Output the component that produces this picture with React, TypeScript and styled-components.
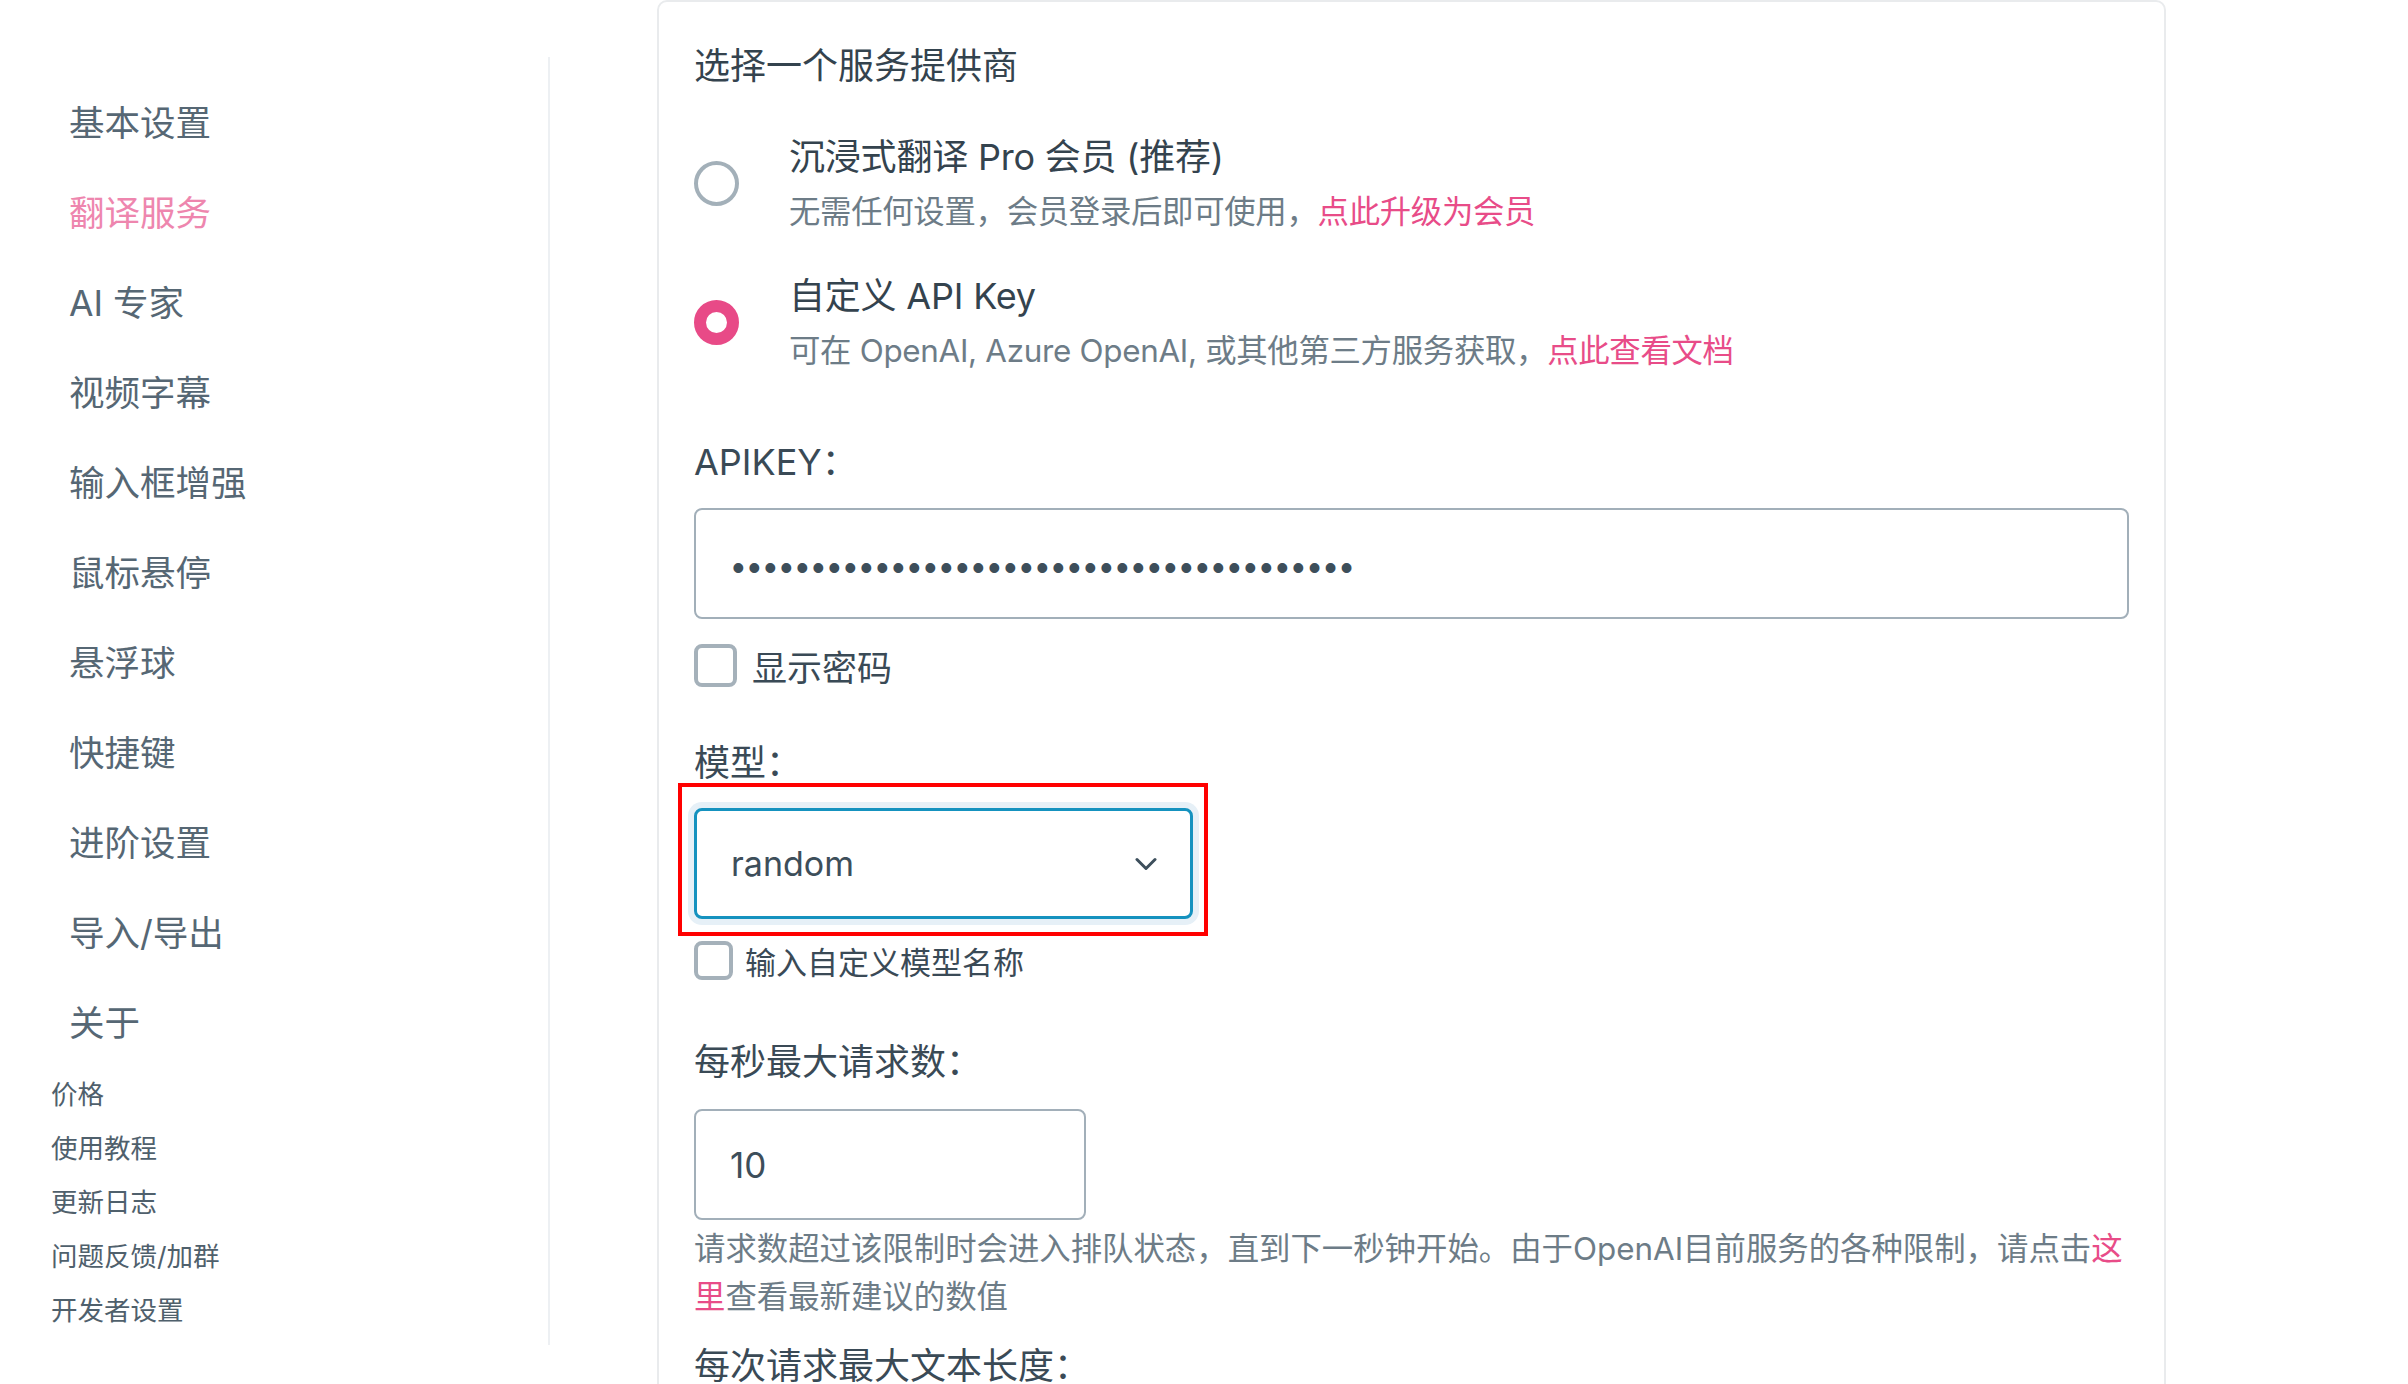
import React from "react";
import styled, { createGlobalStyle } from "styled-components";

const Global = createGlobalStyle`
  html, body { margin: 0; padding: 0; background: #ffffff; }
  body {
    font-family: Inter, "Noto Sans CJK SC", sans-serif;
    width: 2408px;
    height: 1384px;
    overflow: hidden;
  }
  * { box-sizing: border-box; }
`;

const Page = styled.div`
  display: flex;
  align-items: flex-start;
  height: 1384px;
  overflow: hidden;
`;

const Sidebar = styled.nav`
  width: 550px;
  flex: none;
  margin-top: 57px;
  height: 1288px;
  border-right: 2px solid #edf0f3;
  padding-top: 18px;
  display: flex;
  flex-direction: column;
`;

const NavItem = styled.a<{ $active?: boolean }>`
  height: 90px;
  display: flex;
  align-items: center;
  padding-left: 69px;
  font-size: 35.5px;
  color: ${(p) => (p.$active ? "#ee86ae" : "#566774")};
  text-decoration: none;
`;

const SubLink = styled.a`
  height: 54px;
  display: flex;
  align-items: center;
  padding-left: 51px;
  font-size: 26.5px;
  color: #4f606c;
  text-decoration: none;
`;

const Card = styled.main`
  margin-left: 107px;
  width: 1509px;
  flex: none;
  min-height: 1500px;
  border: 2px solid #e9ebed;
  border-radius: 10px;
  padding: 37px 35px 0;
  display: flex;
  flex-direction: column;
  align-items: flex-start;
`;

const Heading = styled.h3`
  margin: 0;
  font-size: 36px;
  line-height: 54px;
  font-weight: 400;
  color: #34434e;
`;

const RadioGroup = styled.div`
  margin-top: 37px;
  display: flex;
  flex-direction: column;
  gap: 33px;
`;

const Option = styled.label`
  display: flex;
  align-items: center;
  gap: 50px;
`;

const Radio = styled.input.attrs({ type: "radio" })`
  appearance: none;
  margin: 0;
  flex: none;
  width: 45px;
  height: 45px;
  border-radius: 50%;
  background: #fff;
  border: 4px solid #a3b0b9;
  &:checked {
    border: 12.5px solid #e84a87;
  }
`;

const OptionText = styled.div`
  display: flex;
  flex-direction: column;
`;

const OptionTitle = styled.div`
  font-size: 36px;
  line-height: 54px;
  color: #34434e;
  letter-spacing: -0.2px;
`;

const OptionDesc = styled.div`
  margin-top: 4px;
  font-size: 31.4px;
  line-height: 48px;
  color: #6d7c87;
  letter-spacing: -0.3px;
`;

const Link = styled.a`
  color: #e84c88;
  text-decoration: none;
`;

const FieldLabel = styled.div<{ $mt: number }>`
  margin-top: ${(p) => p.$mt}px;
  font-size: 36px;
  line-height: 54px;
  color: #3a4a56;
`;

const TextInput = styled.input<{ $width: number; $mt: number }>`
  margin-top: ${(p) => p.$mt}px;
  width: ${(p) => p.$width}px;
  height: 111px;
  border: 2px solid #a2afb9;
  border-radius: 8px;
  background: #fff;
  padding: 0 34px;
  font-family: Inter, "Noto Sans CJK SC", sans-serif;
  font-size: 35px;
  color: #3d4e5a;
  outline: none;
`;

const PasswordInput = styled(TextInput)`
  font-family: "Liberation Sans", sans-serif;
  font-size: 36px;
  letter-spacing: 3.4px;
  padding: 8px 0 0 36px;
`;

const CheckRow = styled.label<{ $mt: number; $size: number; $gap: number }>`
  margin-top: ${(p) => p.$mt}px;
  height: 54px;
  display: flex;
  align-items: center;
  gap: ${(p) => p.$gap}px;
  font-size: ${(p) => p.$size}px;
  color: #3a4a56;
`;

const Checkbox = styled.input.attrs({ type: "checkbox" })<{ $box: number }>`
  appearance: none;
  margin: 0;
  flex: none;
  width: ${(p) => p.$box}px;
  height: ${(p) => p.$box}px;
  border: 4px solid #a5b1ba;
  border-radius: 8px;
  background: #fff;
`;

const SelectWrap = styled.div`
  position: relative;
  margin-top: 18px;
  width: 499px;
  height: 111px;
`;

const Select = styled.select`
  appearance: none;
  width: 100%;
  height: 100%;
  border: 3px solid #1592bf;
  border-radius: 8px;
  box-shadow: 0 0 0 6px #e6f0f7;
  background: #fff;
  padding: 0 34px;
  font-family: Inter, "Noto Sans CJK SC", sans-serif;
  font-size: 34px;
  color: #3d4e5a;
  outline: none;
`;

const Chevron = styled.svg`
  position: absolute;
  right: 36px;
  top: 50%;
  transform: translateY(-50%);
  pointer-events: none;
`;

const Highlight = styled.div`
  position: absolute;
  top: -25px;
  left: -16px;
  right: -15px;
  bottom: -17px;
  border: 4px solid #ff0000;
  pointer-events: none;
`;

const Help = styled.p`
  margin: 5px 0 0;
  width: 100%;
  font-size: 31.4px;
  line-height: 48px;
  color: #6d7c87;
`;

const navItems = [
  "基本设置",
  "翻译服务",
  "AI 专家",
  "视频字幕",
  "输入框增强",
  "鼠标悬停",
  "悬浮球",
  "快捷键",
  "进阶设置",
  "导入/导出",
  "关于",
];

const subLinks = ["价格", "使用教程", "更新日志", "问题反馈/加群", "开发者设置"];

export default function App() {
  return (
    <>
      <Global />
      <Page>
        <Sidebar>
          {navItems.map((n) => (
            <NavItem key={n} $active={n === "翻译服务"}>
              {n}
            </NavItem>
          ))}
          {subLinks.map((s) => (
            <SubLink key={s}>{s}</SubLink>
          ))}
        </Sidebar>
        <Card>
          <Heading>选择一个服务提供商</Heading>
          <RadioGroup>
            <Option>
              <Radio name="provider" readOnly />
              <OptionText>
                <OptionTitle>沉浸式翻译 Pro 会员 (推荐)</OptionTitle>
                <OptionDesc>
                  无需任何设置，会员登录后即可使用，<Link>点此升级为会员</Link>
                </OptionDesc>
              </OptionText>
            </Option>
            <Option>
              <Radio name="provider" defaultChecked />
              <OptionText>
                <OptionTitle>自定义 API Key</OptionTitle>
                <OptionDesc>
                  可在 OpenAI, Azure OpenAI, 或其他第三方服务获取，<Link>点此查看文档</Link>
                </OptionDesc>
              </OptionText>
            </Option>
          </RadioGroup>

          <FieldLabel $mt={60}>APIKEY：</FieldLabel>
          <PasswordInput
            type="password"
            $mt={19}
            $width={1435}
            readOnly
            value={"x".repeat(39)}
          />
          <CheckRow $mt={19} $size={35} $gap={15}>
            <Checkbox $box={43} />
            显示密码
          </CheckRow>

          <FieldLabel $mt={44}>模型：</FieldLabel>
          <SelectWrap>
            <Select defaultValue="random">
              <option value="random">random</option>
            </Select>
            <Chevron width="22" height="13" viewBox="0 0 22 13">
              <path d="M2 2 L11 11 L20 2" fill="none" stroke="#3d4f5c" strokeWidth="3" strokeLinecap="round" strokeLinejoin="round" />
            </Chevron>
            <Highlight />
          </SelectWrap>
          <CheckRow $mt={14} $size={31} $gap={12}>
            <Checkbox $box={39} />
            输入自定义模型名称
          </CheckRow>

          <FieldLabel $mt={48}>每秒最大请求数：</FieldLabel>
          <TextInput type="number" $mt={20} $width={392} readOnly value="10" />
          <Help>
            请求数超过该限制时会进入排队状态，直到下一秒钟开始。由于OpenAI目前服务的各种限制，请点击<Link>这里</Link>查看最新建议的数值
          </Help>

          <FieldLabel $mt={18}>每次请求最大文本长度：</FieldLabel>
        </Card>
      </Page>
    </>
  );
}
